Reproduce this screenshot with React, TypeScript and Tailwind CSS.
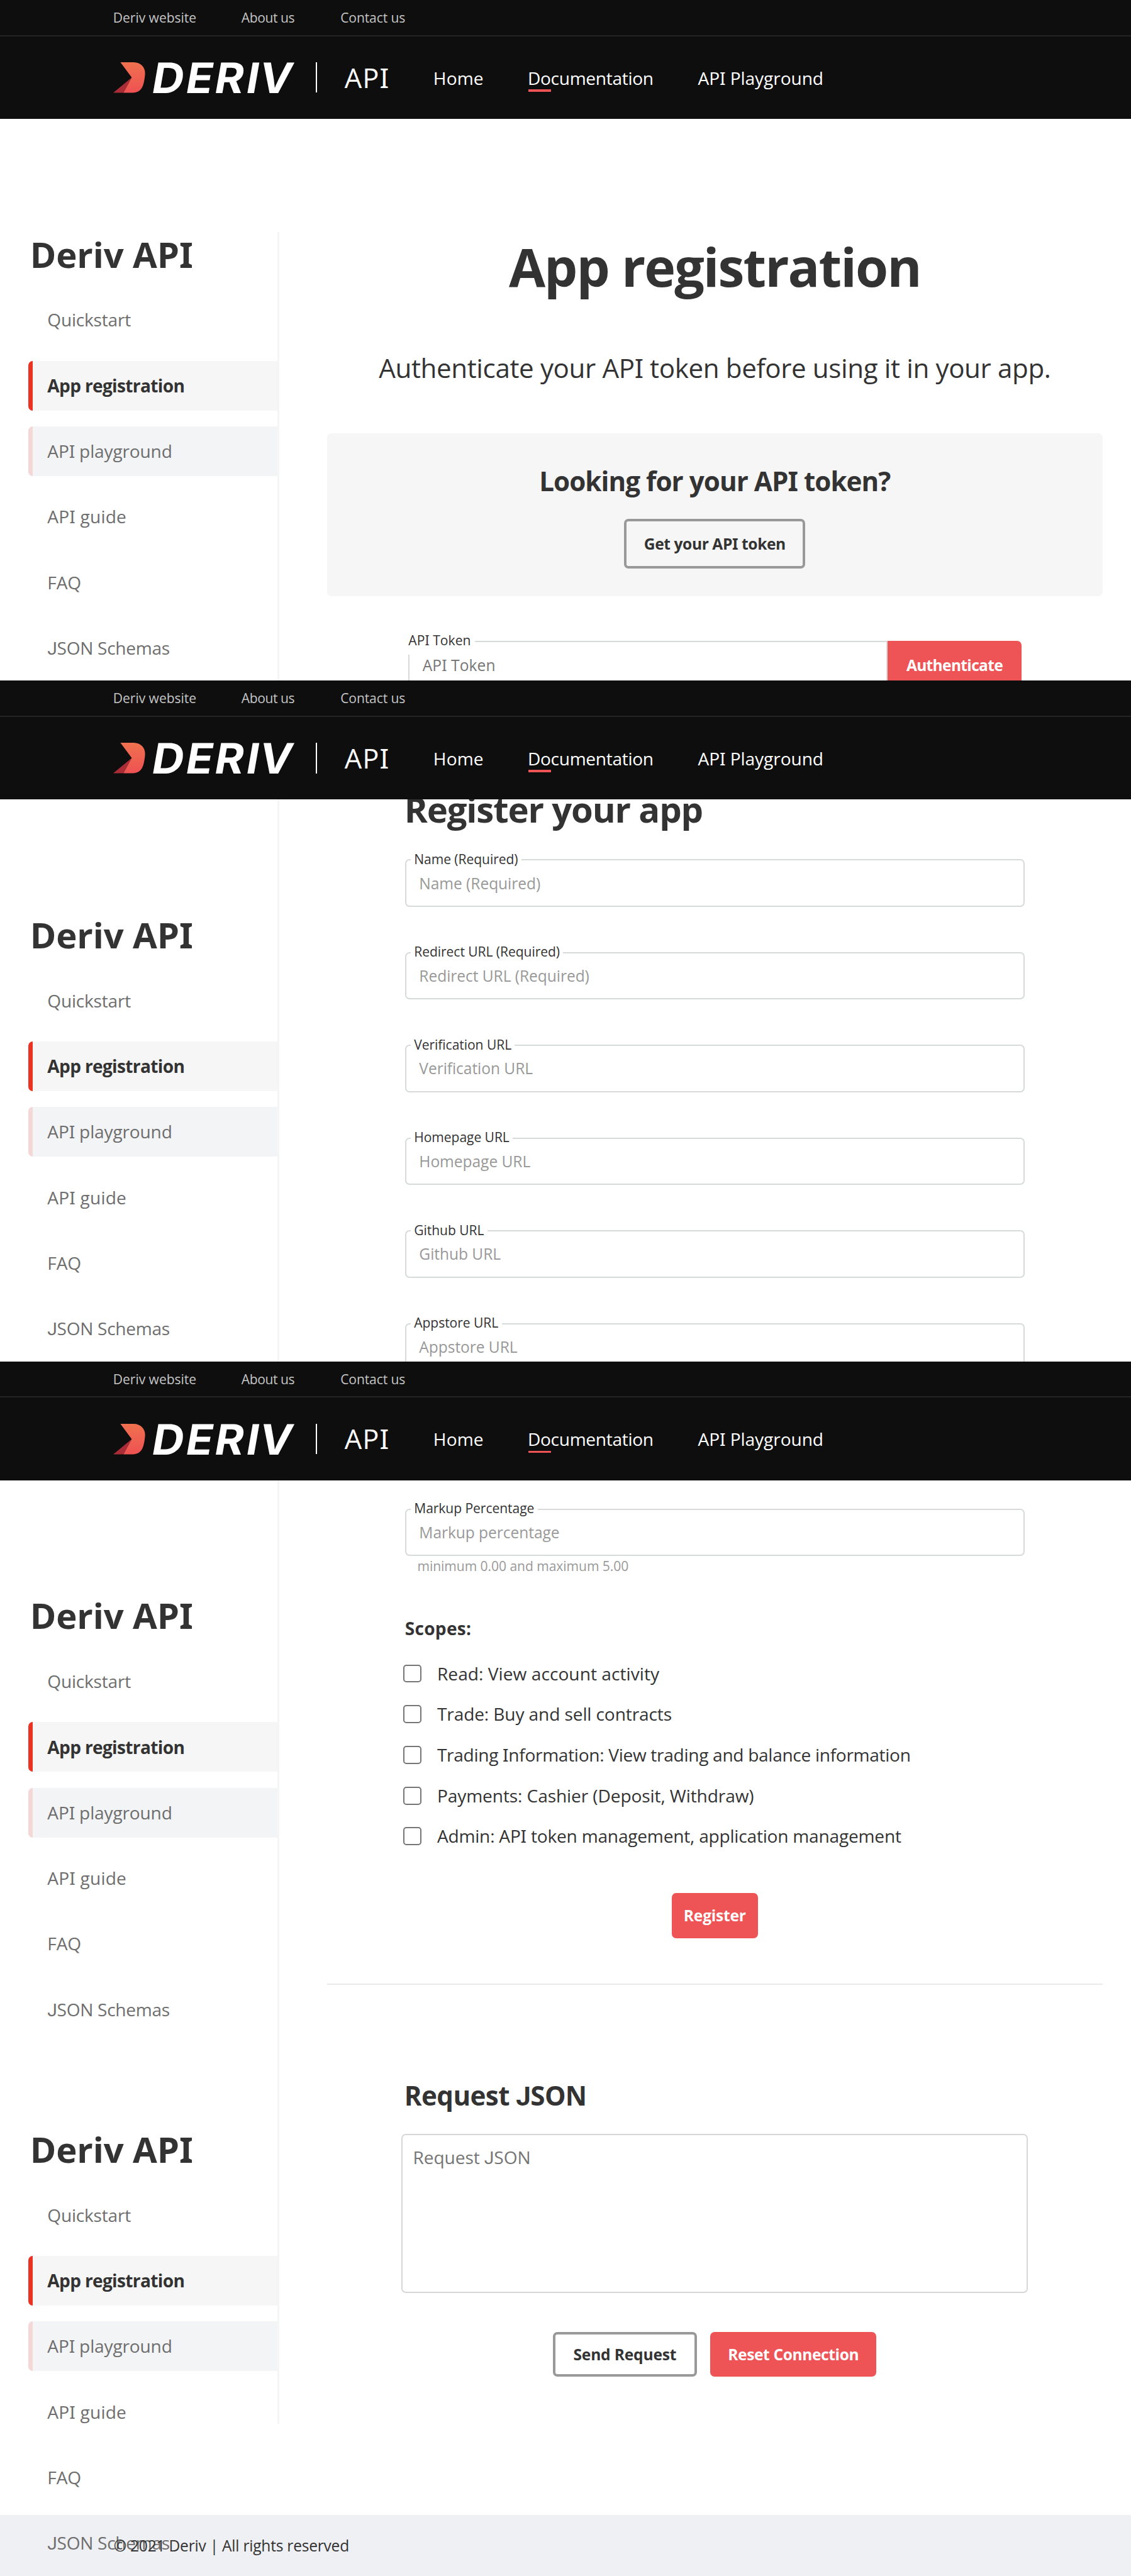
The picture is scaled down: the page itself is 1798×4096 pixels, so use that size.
import type { ReactNode } from "react";

function T({ children, className = "" }: { children: string; className?: string }) {
  const parts = children.split(/([IJ])/);
  return (
    <span className={"whitespace-nowrap " + className}>
      {parts.map((part, i) =>
        part === "I" ? (
          <span key={i} className="font-['Noto_Sans'] leading-[0]">I</span>
        ) : part === "J" ? (
          <span key={i} className="font-['Roboto'] leading-[0]">J</span>
        ) : (
          part
        ),
      )}
    </span>
  );
}

function Logo() {
  return (
    <svg className="h-54 w-320 overflow-visible" viewBox="200 110 320 54">
      <defs>
        <linearGradient id="mark" x1="0" y1="0" x2="0" y2="1">
          <stop offset="0" stopColor="#f0714f" />
          <stop offset="1" stopColor="#ee5252" />
        </linearGradient>
      </defs>
      <path d="M200 164 L232.7 137 L218 164 Z" fill="#a92c36" />
      <path
        d="M212.7 110 H236 C249 110 257 119.5 256.3 131 C255.8 137 255 143 253.3 149 C250.5 158.5 244.5 164 234 164 H218 L232.7 137 Z"
        fill="url(#mark)"
      />
      <text
        transform="translate(0 164) skewX(-9.8) scale(1.05 1)"
        x="252.6 309.8 358.4 411.7 433"
        y="0"
        className="fill-white font-['Inter'] text-[74.3px] font-bold"
      >
        DERIV
      </text>
    </svg>
  );
}

function Header() {
  return (
    <header className="relative z-30 h-210 w-full bg-[#0e0e0e]">
      <div className="flex h-64 items-center border-b-2 border-[#242424] pl-200 text-[21.08px] text-[#c4c4c4]">
        <T className="w-227 tracking-[-0.002em]">Deriv website</T>
        <T className="w-175 tracking-[-0.021em]">About us</T>
        <T className="tracking-[-0.0055em]">Contact us</T>
      </div>
      <div className="flex h-146 items-center pl-200 text-[28.11px] leading-32 text-white">
        <Logo />
        <div className="ml-38 h-54 w-[2px] bg-white" />
        <T className="mt-2 ml-49 w-157 text-[43.5px] tracking-[0.025em]">API</T>
        <T className="mt-2 w-167 tracking-[0.004em]">Home</T>
        <div className="relative mt-2 w-301">
          <T className="block tracking-[-0.0115em]">Documentation</T>
          <div className="absolute top-36 left-1 h-[3.6px] w-40 bg-[#ee5456]" />
        </div>
        <T className="mt-2 tracking-[-0.003em]">API Playground</T>
      </div>
    </header>
  );
}

const NAV = [
  { label: "Quickstart", text: "tracking-[-0.0079em]", row: "border-transparent text-[#6e6e6e]" },
  { label: "App registration", text: "tracking-[-0.0239em]", row: "border-[#ec3323] bg-[#f6f6f6] font-bold text-[#333333]" },
  { label: "API playground", text: "tracking-[-0.0063em]", row: "border-[#f4d8d7] bg-[#f3f4f6] text-[#6e6e6e]" },
  { label: "API guide", text: "tracking-[0.0063em]", row: "border-transparent text-[#6e6e6e]" },
  { label: "FAQ", text: "tracking-[-0.005em]", row: "border-transparent text-[#6e6e6e]" },
  { label: "JSON Schemas", text: "tracking-[-0.0105em]", row: "border-transparent text-[#6e6e6e]" },
];

function SideNav() {
  return (
    <nav className="w-490">
      <h2 className="ml-53 text-[56.21px] leading-80 font-bold text-[#333333]">
        <T className="tracking-[-0.002em]">Deriv API</T>
      </h2>
      <ul className="mt-32 ml-50 flex flex-col gap-28">
        {NAV.map((n) => (
          <li
            key={n.label}
            className={"flex h-88 items-center rounded-l-[7px] border-l-[7px] pl-26 text-[28.11px] leading-32 " + n.row}
          >
            <T className={n.text}>{n.label}</T>
          </li>
        ))}
      </ul>
    </nav>
  );
}

function Field({ label, placeholder }: { label: string; placeholder: string }) {
  return (
    <div className="relative flex h-84 w-full shrink-0 items-center rounded-[7px] border-2 border-[#d6dada] pl-23">
      <T className="absolute -top-15 left-8 bg-white px-6 text-[21.08px] leading-24 tracking-[-0.003em] text-[#333333]">{label}</T>
      <T className="text-[24.59px] leading-28 tracking-[-0.0026em] text-[#999999]">{placeholder}</T>
    </div>
  );
}

function Button({ kind, className, children }: { kind: "solid" | "outline"; className: string; children: ReactNode }) {
  const look = kind === "solid" ? "bg-[#ee5456] text-white" : "border-4 border-[#999999] text-[#333333]";
  return (
    <button className={"flex shrink-0 items-center justify-center rounded-[7px] text-[24.59px] leading-28 font-bold " + look + " " + className}>
      {children}
    </button>
  );
}

const FIELDS = ["Name (Required)", "Redirect URL (Required)", "Verification URL", "Homepage URL", "Github URL", "Appstore URL"];

const SCOPES = [
  { label: "Read: View account activity", text: "tracking-[0.0015em]" },
  { label: "Trade: Buy and sell contracts", text: "tracking-[-0.0044em]" },
  { label: "Trading Information: View trading and balance information", text: "tracking-[-0.0112em]" },
  { label: "Payments: Cashier (Deposit, Withdraw)", text: "tracking-[-0.004em]" },
  { label: "Admin: API token management, application management", text: "tracking-[-0.008em]" },
];

export default function App() {
  return (
    <div className="w-2000 overflow-hidden bg-white font-['Open_Sans',sans-serif] text-[#333333] [--spacing:0.899px]">
      <section className="h-1204 overflow-hidden">
        <Header />
        <div className="flex pt-200">
          <SideNav />
          <div className="h-794 w-4 bg-[#f5f5f6]" />
          <main className="flex w-1506 flex-col items-center pt-14 pr-50 pl-84">
            <h1 className="text-[84.32px] leading-96 font-bold">
              <T className="tracking-[-0.023em]">App registration</T>
            </h1>
            <p className="mt-106 text-[42.16px] leading-48">
              <T className="tracking-[-0.0094em]">Authenticate your API token before using it in your app.</T>
            </p>
            <div className="mt-92 flex h-288 w-full flex-col items-center rounded-[7px] bg-[#f6f6f6] pt-60">
              <h3 className="text-[42.16px] leading-48 font-bold">
                <T className="tracking-[-0.0227em]">Looking for your API token?</T>
              </h3>
              <Button kind="outline" className="mt-44 h-88 w-320">
                <T className="tracking-[-0.0168em]">Get your API token</T>
              </Button>
            </div>
            <div className="mt-80 flex h-84 w-1084 shrink-0">
              <div className="relative flex h-84 w-848 items-center border-2 border-[#d6dada] pl-23">
                <T className="absolute -top-16 -left-4 w-120 bg-white pb-14 pl-2 text-[21.08px] leading-24 tracking-[0.0029em] text-[#333333]">API Token</T>
                <T className="text-[24.59px] leading-28 tracking-[0.0029em] text-[#777777]">API Token</T>
              </div>
              <Button kind="solid" className="h-84 w-236 rounded-l-none">
                <T className="tracking-[-0.0281em]">Authenticate</T>
              </Button>
            </div>
          </main>
        </div>
      </section>

      <section className="h-1204 overflow-hidden">
        <Header />
        <div className="flex">
          <div className="pt-200">
            <SideNav />
          </div>
          <div className="h-994 w-4 bg-[#f5f5f6]" />
          <main className="flex h-994 w-1506 flex-col pr-188 pl-222">
            <h2 className="-mt-22 -ml-1 text-[56.21px] leading-80 font-bold">
              <T className="tracking-[-0.0205em]">Register your app</T>
            </h2>
            <div className="mt-48 flex flex-col gap-80">
              {FIELDS.map((f) => (
                <Field key={f} label={f} placeholder={f} />
              ))}
            </div>
          </main>
        </div>
      </section>

      <section className="h-2148 overflow-hidden">
        <Header />
        <div className="flex h-1830">
          <div className="relative z-10 flex flex-col gap-164 pt-200">
            <SideNav />
            <SideNav />
          </div>
          <div className="h-1669 w-4 bg-[#f5f5f6]" />
          <main className="flex w-1506 flex-col items-center pt-50 pr-50 pl-84">
            <div className="flex w-1096 flex-col">
              <Field label="Markup Percentage" placeholder="Markup percentage" />
              <T className="mt-5 ml-22 text-[21.08px] leading-24 tracking-[-0.0025em] text-[#999999]">minimum 0.00 and maximum 5.00</T>
              <h4 className="mt-83 text-[28.11px] leading-32 font-bold">
                <T className="tracking-[0.01em]">Scopes:</T>
              </h4>
              <div className="mt-28 -ml-3 flex flex-col">
                {SCOPES.map((s) => (
                  <label key={s.label} className="flex h-72 items-center gap-28 text-[28.11px] leading-32">
                    <span className="size-32 shrink-0 rounded-[5px] border-2 border-[#767676] bg-white" />
                    <T className={s.text}>{s.label}</T>
                  </label>
                ))}
              </div>
            </div>
            <Button kind="solid" className="mt-64 h-80 w-152">
              <T className="tracking-[-0.0085em]">Register</T>
            </Button>
            <div className="mt-80 h-[2px] w-full shrink-0 bg-[#e9eaea]" />
            <div className="mt-172 w-1096">
              <h3 className="-ml-1 text-[42.16px] leading-48 font-bold">
                <T className="tracking-[-0.014em]">Request JSON</T>
              </h3>
            </div>
            <div className="mt-44 h-282 w-1108 shrink-0 rounded-[7px] border-2 border-[#d6d8d8] pt-20 pl-18 text-[28.11px] leading-40 text-[#757575]">
              <T className="tracking-[-0.003em]">Request JSON</T>
            </div>
            <div className="mt-68 flex gap-24">
              <Button kind="outline" className="h-80 w-254">
                <T className="tracking-[-0.0071em]">Send Request</T>
              </Button>
              <Button kind="solid" className="h-80 w-294">
                <T className="tracking-[-0.0161em]">Reset Connection</T>
              </Button>
            </div>
          </main>
        </div>
        <footer className="flex h-108 items-center bg-[#eff0f3] pl-201 text-[24.59px] leading-28">
          <T className="relative z-20 tracking-[-0.0095em]">© 2021 Deriv | All rights reserved</T>
        </footer>
      </section>
    </div>
  );
}
